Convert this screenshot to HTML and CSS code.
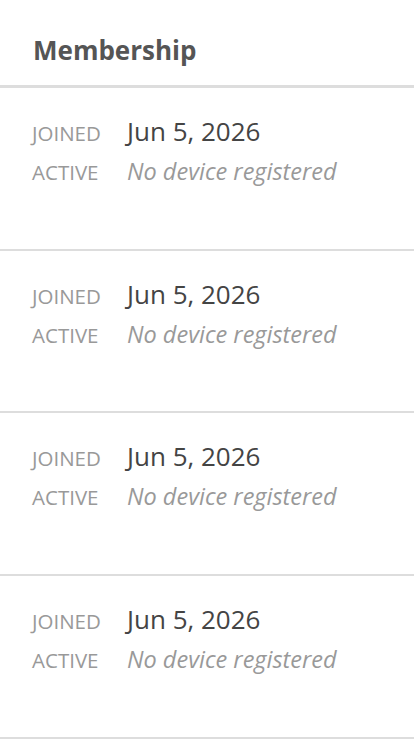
FILE: index.html
```html
<!DOCTYPE html>
<html>
<head>
<meta charset="utf-8">
<link rel="stylesheet" href="styles.css">
</head>
<body>
<div class="page">
  <div class="header">Membership</div>
  <div class="row">
    <div class="line"><span class="label">JOINED</span><span class="value">Jun 5, 2026</span></div>
    <div class="line"><span class="label">ACTIVE</span><span class="value muted">No device registered</span></div>
  </div>
  <div class="row">
    <div class="line"><span class="label">JOINED</span><span class="value">Jun 5, 2026</span></div>
    <div class="line"><span class="label">ACTIVE</span><span class="value muted">No device registered</span></div>
  </div>
  <div class="row">
    <div class="line"><span class="label">JOINED</span><span class="value">Jun 5, 2026</span></div>
    <div class="line"><span class="label">ACTIVE</span><span class="value muted">No device registered</span></div>
  </div>
  <div class="row">
    <div class="line"><span class="label">JOINED</span><span class="value">Jun 5, 2026</span></div>
    <div class="line"><span class="label">ACTIVE</span><span class="value muted">No device registered</span></div>
  </div>
</div>
</body>
</html>
```
FILE: styles.css
```css
html, body {
  margin: 0;
  padding: 0;
  background: #fff;
  font-family: "Open Sans", "Liberation Sans", sans-serif;
}
.page {
  width: 414px;
}
.header {
  height: 88px;
  box-sizing: border-box;
  padding: 15px 0 0 33px;
  display: flex;
  align-items: center;
  font-size: 26px;
  font-weight: 700;
  color: #555;
  border-bottom: 3px solid #ddd;
}
.row {
  box-sizing: border-box;
  height: 162.67px;
  padding: 23px 0 0 32px;
  border-bottom: 2px solid #ddd;
}
.line {
  display: flex;
  align-items: baseline;
  height: 40px;
  line-height: 40px;
}
.label {
  width: 95px;
  font-size: 20.5px;
  color: #999;
}
.value {
  font-size: 26px;
  color: #444;
}
.value.muted {
  font-size: 23.5px;
  font-style: italic;
  color: #999;
}
```
